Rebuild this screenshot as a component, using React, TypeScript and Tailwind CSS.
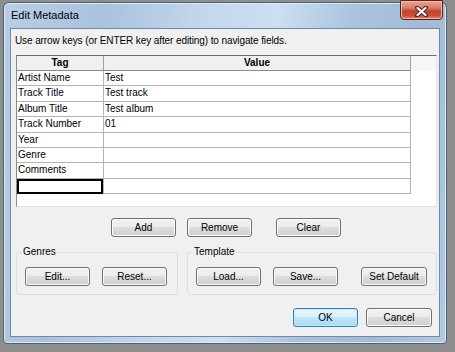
import React from "react";

const font = { fontFamily: '"Liberation Sans", Arial, sans-serif' };

function Btn({ label, className = "", primary = false }: { label: string; className?: string; primary?: boolean }) {
  return (
    <div
      className={
        "flex h-[19px] w-[65px] shrink-0 items-center justify-center rounded-[3px] border text-[10px] leading-none text-black " +
        (primary
          ? "border-[#3c7fb1] bg-[linear-gradient(to_bottom,#eaf6fd_0%,#d9f0fc_50%,#bee6fd_50%,#a7d9f5_100%)] shadow-[inset_0_0_0_1px_#c6e9fb]"
          : "border-[#707070] bg-[linear-gradient(to_bottom,#f2f2f2_0%,#ebebeb_50%,#dddddd_50%,#cfcfcf_100%)] shadow-[inset_0_0_0_1px_#fcfcfc]") +
        " " +
        className
      }
    >
      {label}
    </div>
  );
}

function Group({ title, className = "", children }: { title: string; className?: string; children: React.ReactNode }) {
  return (
    <div className={"relative h-[43px] shrink-0 rounded-[3px] border border-[#d5dfe5] " + className}>
      <div className="absolute left-[5px] top-[-7px] bg-[#f0f0f0] px-[1px] text-[10px] leading-[12px] text-black">{title}</div>
      <div className="flex pl-[8px] pt-[14px]">{children}</div>
    </div>
  );
}

const rows: [string, string][] = [
  ["Artist Name", "Test"],
  ["Track Title", "Test track"],
  ["Album Title", "Test album"],
  ["Track Number", "01"],
  ["Year", ""],
  ["Genre", ""],
  ["Comments", ""],
];

export default function App() {
  return (
    <div className="h-[352px] w-[455px] overflow-hidden bg-[#8e8e8e]" style={font}>
      <div className="relative ml-[3px] mt-[2px] h-[342px] w-[444px] rounded-t-[6px] rounded-b-[4px] border border-[#4f6377] bg-[linear-gradient(100deg,#b9cee6_0%,#a9c2de_20%,#c3d7ec_40%,#cddff0_55%,#aac3df_70%,#a1bbd8_85%,#b3cae3_100%)] shadow-[inset_0_0_0_1px_#dce8f4]">
        {/* title bar */}
        <div className="flex h-[25px] items-center pl-[7px] text-[11px] text-black">Edit Metadata</div>
        {/* close button */}
        <div className="absolute right-[3px] top-[-3px] flex h-[20px] w-[43px] items-center justify-center rounded-b-[4px] border border-[#5a2218] bg-[linear-gradient(to_bottom,#e8a894_0%,#d77a63_40%,#c4442c_55%,#c94e34_80%,#e0876c_100%)] shadow-[inset_0_0_0_1px_#f0b9a8]">
          <svg width="13" height="11" viewBox="0 0 13 11" className="mt-[2px]">
            <path d="M2 1.5 L11 9.5 M11 1.5 L2 9.5" stroke="#4a2a25" strokeWidth="4" strokeLinecap="round" />
            <path d="M2.5 2 L10.5 9 M10.5 2 L2.5 9" stroke="#ffffff" strokeWidth="2.2" strokeLinecap="round" />
          </svg>
        </div>
        {/* client area */}
        <div className="ml-[6px] flex h-[309px] w-[430px] flex-col border border-[#7289a3] bg-[#f0f0f0]">
          <div className="ml-[4px] mt-[6px] h-[12px] text-[10px] leading-[12px] tracking-[-0.1px] text-black">
            Use arrow keys (or ENTER key after editing) to navigate fields.
          </div>
          {/* table */}
          <div className="ml-[5px] mt-[8px] h-[152px] w-[421px] border border-b-[#e2e2e2] border-l-[#8a8a8a] border-r-[#e2e2e2] border-t-[#6e6e6e] bg-white">
            <div className="flex">
              <div className="w-[394px]">
                <div className="flex h-[15px] border-b border-[#8c8c8c] bg-[#f0f0f0] text-[10px] font-bold leading-[14px] text-black">
                  <div className="w-[87px] border-r border-[#a0a0a0] text-center">Tag</div>
                  <div className="flex-1 border-r border-[#a0a0a0] text-center">Value</div>
                </div>
                {rows.map(([t, v]) => (
                  <div key={t} className="flex h-[15.4px] border-b border-[#b4b4b4] text-[10px] leading-[14px] text-black">
                    <div className="w-[87px] border-r border-[#b4b4b4] pl-[1px]">{t}</div>
                    <div className="flex-1 border-r border-[#b4b4b4] pl-[1px]">{v}</div>
                  </div>
                ))}
                <div className="flex h-[15.4px] border-b border-[#b4b4b4]">
                  <div className="w-[87px] border-r border-[#b4b4b4]">
                    <div className="h-[15px] w-[86px] border-2 border-black"></div>
                  </div>
                  <div className="flex-1 border-r border-[#b4b4b4]"></div>
                </div>
              </div>
              <div className="h-[15px] flex-1 bg-[#f6f6f6]"></div>
            </div>
          </div>
          {/* add/remove/clear */}
          <div className="mt-[11px] flex">
            <Btn label="Add" className="ml-[100px]" />
            <Btn label="Remove" className="ml-[11px]" />
            <Btn label="Clear" className="ml-[24px]" />
          </div>
          {/* groups */}
          <div className="mt-[15px] flex">
            <Group title="Genres" className="ml-[5px] w-[162px]">
              <Btn label="Edit..." />
              <Btn label="Reset..." className="ml-[12px]" />
            </Group>
            <Group title="Template" className="ml-[9px] w-[250px]">
              <Btn label="Load..." />
              <Btn label="Save..." className="ml-[12px]" />
              <Btn label="Set Default" className="ml-[23px] w-[66px]" />
            </Group>
          </div>
          {/* ok/cancel */}
          <div className="mt-[13px] flex">
            <Btn label="OK" primary className="ml-[282px]" />
            <Btn label="Cancel" className="ml-[8px] w-[66px]" />
          </div>
        </div>
      </div>
    </div>
  );
}
